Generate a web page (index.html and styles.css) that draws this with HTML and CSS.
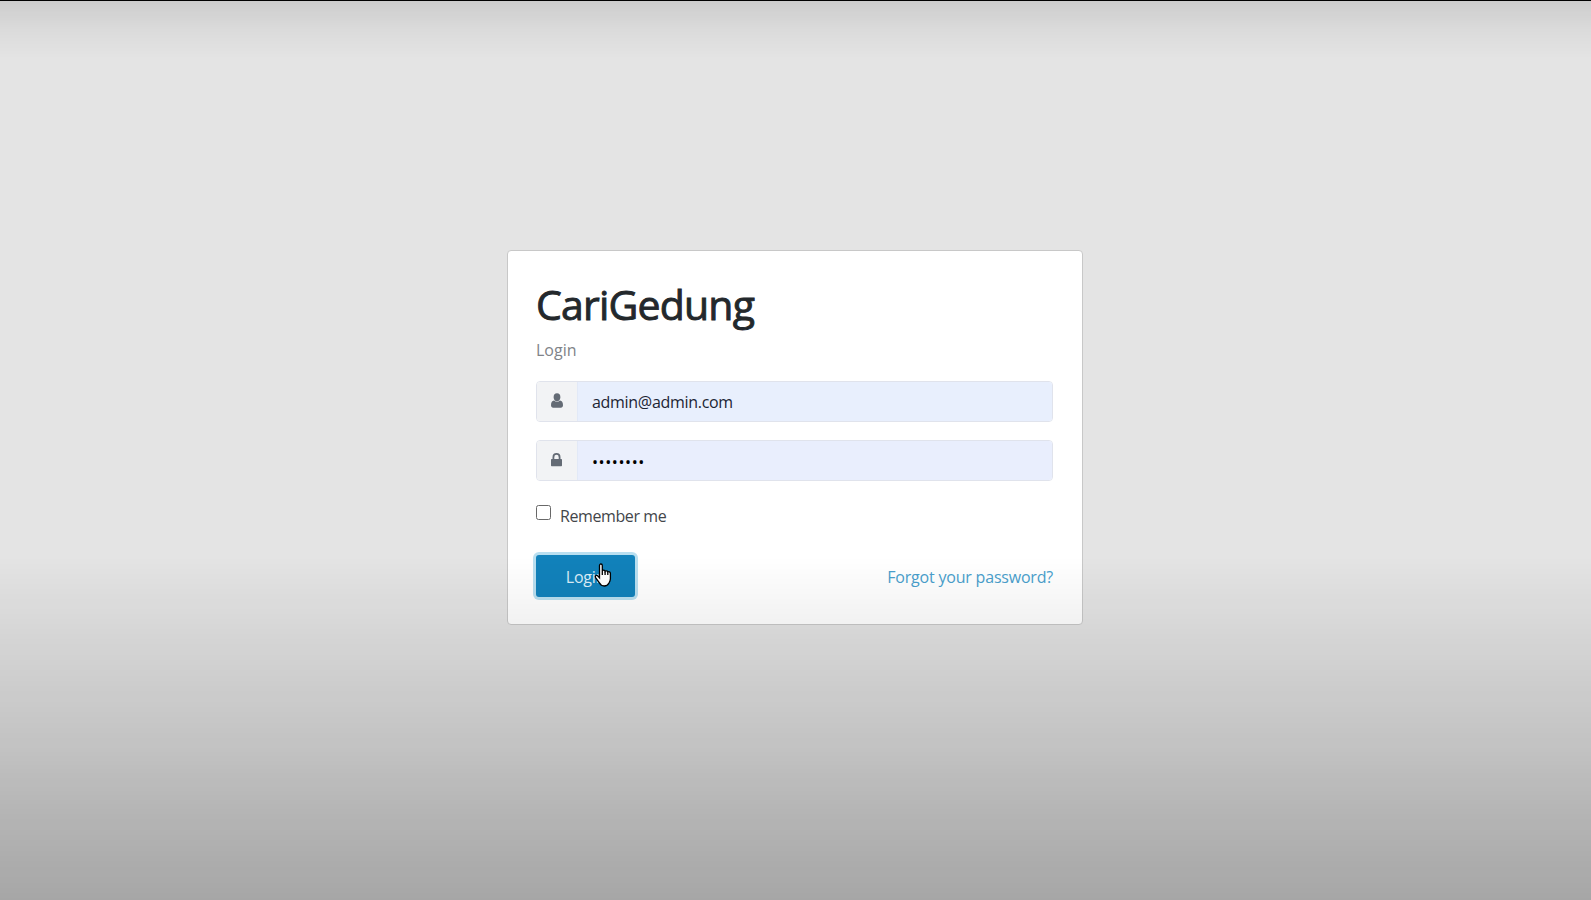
FILE: index.html
```
<!DOCTYPE html>
<html lang="id">

<head>
    <meta charset="UTF-8">
    <title>CariGedung</title>
    <link rel="stylesheet" href="styles.css">
</head>

<body>
    <main class="login-page">
        <form class="card">
            <h1>CariGedung</h1>
            <p class="subtitle">Login</p>

            <div class="input-group">
                <span class="addon">
                    <svg width="14" height="16" viewBox="0 0 14 16">
                        <path d="M3.600 4.200a3.400 3.900 0 0 1 6.800 0c0 2.200-1.500 4.200-3.400 4.200s-3.400-2-3.400-4.200z M4 7.500C5.800 9.400 8.200 9.400 10 7.500c2.200.2 3 2.300 3 4.700 0 1.600-.9 2.500-2.200 2.500H3.200C1.900 14.700 1 13.800 1 12.200c0-2.400.8-4.500 3-4.700z" />
                    </svg>
                </span>
                <input type="text" class="email" value="admin@admin.com">
            </div>

            <div class="input-group">
                <span class="addon">
                    <svg width="14" height="16" viewBox="0 0 14 16">
                        <path fill-rule="evenodd" d="M2.500 7V5.200a4 4.200 0 0 1 8 0V7h.5c.6 0 1 .4 1 1v5.200c0 .6-.4 1-1 1H2c-.6 0-1-.4-1-1V8c0-.6.4-1 1-1z M4.300 7h4.400V5.200a2.200 2.400 0 0 0-4.400 0z" />
                    </svg>
                </span>
                <input type="password" class="password" value="password">
            </div>

            <label class="remember">
                <input type="checkbox">
                <span>Remember me</span>
            </label>

            <div class="actions">
                <button type="button" class="login-button">
                    Login
                    <svg class="pointer" width="19" height="25" viewBox="0 0 19 25">
                        <path d="M5.500 2.500C5.500.5 8.300.5 8.300 2.500V8c.5-1.200 2.600-1 2.800.4.800-1 2.500-.6 2.700.7.900-.8 2.600-.3 2.600 1.400v5.300c0 2.100-.8 3.200-1.600 4.500-.8 2-2.300 2.700-4.600 2.700-2.700 0-3.900-1.400-5-3.500L1.600 14.600c-1-1.900 1-3 2.300-1.600l1.600 1.800z" />
                        <path class="fingers" d="M8.300 8v4M11.100 8.500V12M13.800 9.200V12" />
                    </svg>
                </button>
                <a class="forgot">Forgot your password?</a>
            </div>
        </form>
    </main>
    <div class="shade"></div>
</body>

</html>
```
FILE: styles.css
```
* {
    box-sizing: border-box;
}

body {
    margin: 0;
    font-family: "Open Sans", "Noto Sans", sans-serif;
    font-size: 16px;
    color: #23282c;
    background: #e4e4e4;
    overflow: hidden;
}

.login-page {
    display: flex;
    justify-content: center;
    align-items: center;
    height: 100vh;
    padding: 0 1px 25px 0;
}

.card {
    width: 576px;
    height: 375px;
    padding: 27px 29px 27px 28px;
    border: 1px solid #c8c8c8;
    border-radius: 4px;
    background: #fff;
}

h1 {
    margin: 1px 0 8px;
    font-size: 41px;
    font-weight: 400;
    line-height: 50px;
    letter-spacing: -0.8px;
    -webkit-text-stroke: 0.9px #23282c;
}

.subtitle {
    margin: 0 0 18px;
    line-height: 26px;
    color: #808389;
}

.input-group {
    display: flex;
    height: 41px;
    margin-bottom: 18px;
    border: 1px solid #e0e3ec;
    border-radius: 4px;
    overflow: hidden;
}

.addon {
    display: flex;
    flex: 0 0 41px;
    justify-content: center;
    align-items: center;
    background: #f2f3f5;
    border-right: 1px solid #e2e9f7;
}

.addon svg {
    margin-bottom: 1px;
    fill: #646b75;
}

.input-group input {
    flex: 1;
    min-width: 0;
    padding: 1px 14px 0;
    border: 0;
    outline: 0;
    background: #e8effd;
    color: #1c2534;
    font-family: inherit;
    font-size: 16px;
}

.input-group .email {
    letter-spacing: -0.3px;
}

.input-group .password {
    padding-top: 3px;
    background: #e9eefd;
    color: #000;
    letter-spacing: 0.6px;
}

.remember {
    display: flex;
    align-items: center;
    height: 26px;
    margin-top: 22px;
    color: #43464a;
    letter-spacing: -0.4px;
}

.remember input {
    width: 15px;
    height: 15px;
    margin: 0 9px 7px 0;
    appearance: none;
    border: 1px solid #686868;
    border-radius: 2.5px;
    background: #fff;
}

.actions {
    display: flex;
    justify-content: space-between;
    align-items: center;
    margin-top: 26px;
}

.login-button {
    position: relative;
    width: 99px;
    height: 42px;
    padding: 1px 0 0;
    border: 0;
    border-radius: 3px;
    background: #1282bb;
    box-shadow: 0 0 0 3px #b9dff0;
    color: #dceef8;
    font-family: inherit;
    font-size: 16px;
    letter-spacing: -0.2px;
}

.pointer {
    position: absolute;
    left: 58px;
    top: 8px;
    fill: #fff;
    stroke: #000;
    stroke-width: 1.3;
}

.pointer .fingers {
    fill: none;
}

.forgot {
    padding-top: 1px;
    color: #4a9fcd;
    letter-spacing: -0.2px;
}

/* dark fade over the top and bottom of the page */
.shade {
    position: fixed;
    inset: 0;
    border-top: 1px solid #000;
    background:
        linear-gradient(rgba(0, 0, 0, 0.1), rgba(0, 0, 0, 0.07) 14px, rgba(0, 0, 0, 0.03) 32px, transparent 58px),
        linear-gradient(transparent 555px, rgba(0, 0, 0, 0.055) 625px, rgba(0, 0, 0, 0.14) 740px, rgba(0, 0, 0, 0.2) 805px, rgba(0, 0, 0, 0.27) 900px);
    pointer-events: none;
}
```
